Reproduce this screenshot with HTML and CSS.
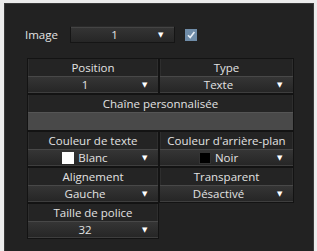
FILE: index.html
```html
<!DOCTYPE html>
<html lang="fr">

<head>
	<meta charset="UTF-8">
	<title>Incrustation</title>
	<link rel="stylesheet" href="styles.css">
</head>

<body>
	<div class="panel">
		<div class="image-row">
			<span class="image-label">Image</span>
			<div class="select select-top">
				<span class="select-text">1</span>
				<span class="arrow">&#9660;</span>
			</div>
			<span class="check">
				<svg width="12" height="12" viewBox="0 0 12 12">
					<rect x="0" y="0" width="12" height="12" fill="#6f8ca8" />
					<path d="M3 6.2 L5.2 8.6 L9.4 3" fill="none" stroke="#e8eef5" stroke-width="1.6" />
				</svg>
			</span>
		</div>

		<div class="form">
			<div class="field">
				<p class="label">Position</p>
				<div class="select">
					<span class="select-text">1</span>
					<span class="arrow">&#9660;</span>
				</div>
			</div>
			<div class="field">
				<p class="label">Type</p>
				<div class="select">
					<span class="select-text">Texte</span>
					<span class="arrow">&#9660;</span>
				</div>
			</div>
			<div class="field field-wide">
				<p class="label">Chaîne personnalisée</p>
				<div class="text-input"></div>
			</div>
			<div class="field">
				<p class="label">Couleur de texte</p>
				<div class="select">
					<span class="select-text"><i class="swatch swatch-white"></i>Blanc</span>
					<span class="arrow">&#9660;</span>
				</div>
			</div>
			<div class="field">
				<p class="label">Couleur d'arrière-plan</p>
				<div class="select">
					<span class="select-text"><i class="swatch swatch-black"></i>Noir</span>
					<span class="arrow">&#9660;</span>
				</div>
			</div>
			<div class="field">
				<p class="label">Alignement</p>
				<div class="select">
					<span class="select-text">Gauche</span>
					<span class="arrow">&#9660;</span>
				</div>
			</div>
			<div class="field">
				<p class="label">Transparent</p>
				<div class="select">
					<span class="select-text">Désactivé</span>
					<span class="arrow">&#9660;</span>
				</div>
			</div>
			<div class="field">
				<p class="label">Taille de police</p>
				<div class="select">
					<span class="select-text">32</span>
					<span class="arrow">&#9660;</span>
				</div>
			</div>
		</div>
	</div>
</body>

</html>
```

FILE: styles.css
```css
* {
	margin: 0;
	padding: 0;
	box-sizing: border-box;
}

body {
	background: #ececec;
	font-family: "Open Sans", "DejaVu Sans", sans-serif;
	font-size: 11.5px;
	color: #e2e2e2;
}

.panel {
	height: 248px;
	margin: 3px 3px 0 4px;
	padding: 22px 0 0 0;
	background: #222;
	border: 1px solid #3a3a3a;
	border-bottom: none;
}

.image-row {
	display: flex;
	align-items: center;
	height: 17px;
}

.image-label {
	width: 45px;
	margin-left: 20px;
}

.select {
	display: flex;
	align-items: center;
	height: 17px;
	line-height: 15px;
	background: linear-gradient(#353535, #262626);
	border-top: 1px solid #484848;
	border-bottom: 1px solid #3e3e3e;
}

.select-top {
	width: 105px;
	border: 1px solid #151515;
	border-top-color: #2a2a2a;
	box-shadow: inset 0 1px 0 #444;
}

.select-text {
	flex: 1;
	display: flex;
	align-items: center;
	justify-content: center;
	white-space: nowrap;
}

.arrow {
	width: 16px;
	font-size: 7px;
	color: #fff;
	text-align: left;
}

.check {
	display: flex;
	margin-left: 10px;
}

.form {
	display: grid;
	grid-template-columns: 132px 135px;
	width: 267px;
	margin: 15px 0 0 22px;
}

.field {
	border: 1px solid #131313;
	box-shadow: inset 1px 0 0 #2e2e2e, inset -1px 0 0 #2e2e2e;
	background: #242424;
}

.field-wide {
	grid-column: span 2;
}

.label {
	height: 17px;
	line-height: 17px;
	text-align: center;
	white-space: nowrap;
}

.text-input {
	height: 18px;
	background: #494949;
	border-top: 1px solid #555;
}

.swatch {
	display: inline-block;
	width: 12px;
	height: 12px;
	margin-right: 4px;
}

.swatch-white {
	background: #fff;
}

.swatch-black {
	background: #000;
	border: 1px solid #333;
}
```
